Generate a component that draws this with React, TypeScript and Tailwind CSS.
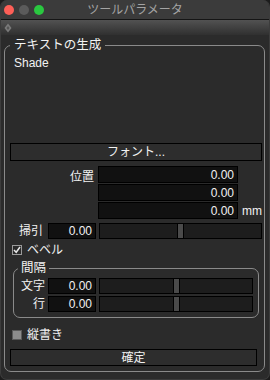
import React from "react";

const FONT = { fontFamily: '"Liberation Sans", "Noto Sans CJK JP", sans-serif' };

function Field({ value, w, h }: { value: string; w: string; h: string }) {
  return (
    <div
      className={`${w} ${h} bg-[#111111] border border-black flex items-center justify-end pr-[3px] text-[12px] leading-[14px] text-[#f2f2f2]`}
    >
      {value}
    </div>
  );
}

function Slider({ left, right }: { left: string; right: string }) {
  return (
    <div className="flex h-[16px]">
      <div className={`${left} h-full bg-[#1d1d1d] border border-black`} />
      <div className="w-[5px] h-full bg-[#4a4a4a] border-y border-black" />
      <div className={`${right} h-full bg-[#1d1d1d] border border-black`} />
    </div>
  );
}

function Check({ checked }: { checked: boolean }) {
  return checked ? (
    <div className="w-[10px] h-[10px] border border-[#9a9a9a] bg-[#2a2a2a] flex items-center justify-center">
      <svg width="8" height="8" viewBox="0 0 8 8">
        <path d="M1 4 L3.2 6.3 L7 1" fill="none" stroke="#e8e8e8" strokeWidth="1.5" />
      </svg>
    </div>
  ) : (
    <div className="w-[10px] h-[10px] border border-[#5a5a5a] bg-[#8c8c8c]" />
  );
}

export default function App() {
  return (
    <div className="w-[270px] h-[380px] bg-[#1c1c1c]" style={FONT}>
      <div className="w-[270px] h-[380px] bg-[#2b2b2b] rounded-[7px] overflow-hidden border-x border-b border-[#3c3c3c] flex flex-col">
        {/* title bar */}
        <div className="relative h-[20px] bg-[#3b3b3b] border-b border-[#151515] flex items-center">
          <div className="flex gap-[5px] pl-[3px]">
            <div className="w-[10px] h-[10px] rounded-full bg-[#fe5f57]" />
            <div className="w-[10px] h-[10px] rounded-full bg-[#5b5b5b]" />
            <div className="w-[10px] h-[10px] rounded-full bg-[#2ac840]" />
          </div>
          <div className="absolute inset-0 flex items-center justify-center text-[12px] text-[#a4a4a4]">
            ツールパラメータ
          </div>
        </div>
        {/* toolbar */}
        <div className="h-[15px] bg-gradient-to-b from-[#525252] to-[#303030] flex items-center pl-[3px]">
          <svg width="8" height="10" viewBox="0 0 8 10">
            <path d="M4 0.5 L7.5 5 L4 9.5 L0.5 5 Z" fill="#7a7a7a" />
            <path d="M4 3 L5.5 5 L4 7 L2.5 5 Z" fill="#555" />
          </svg>
        </div>
        {/* main group */}
        <fieldset className="mt-[2px] ml-[3px] w-[261px] border border-[#8a8a8a] rounded-[7px] pl-[5px] pr-[2px] pb-[5px]">
          <legend className="px-[4px] text-[12.5px] leading-[16px] text-[#f2f2f2]">テキストの生成</legend>
          <div className="h-[90px] pt-[2px] pl-[4px] text-[12px] leading-[16px] text-[#f2f2f2]">Shade</div>
          <div className="w-[252px] h-[18px] border border-black bg-[#2d2d2d] flex items-center justify-center text-[12px] text-[#f2f2f2]">
            フォント...
          </div>
          {/* position */}
          <div className="mt-[5px] flex items-start">
            <div className="w-[84px] pt-[3px] text-right text-[12px] leading-[16px] text-[#f2f2f2]">位置</div>
            <div className="ml-[4px] flex flex-col gap-[1px]">
              <Field value="0.00" w="w-[140px]" h="h-[17px]" />
              <Field value="0.00" w="w-[140px]" h="h-[17px]" />
              <Field value="0.00" w="w-[140px]" h="h-[17px]" />
            </div>
            <div className="ml-[4px] self-end text-[12px] leading-[16px] text-[#f2f2f2]">mm</div>
          </div>
          {/* sweep */}
          <div className="mt-[4px] flex items-center">
            <div className="w-[33px] text-right text-[12px] leading-[16px] text-[#f2f2f2]">掃引</div>
            <div className="ml-[5px]">
              <Field value="0.00" w="w-[48px]" h="h-[16px]" />
            </div>
            <div className="ml-[3px]">
              <Slider left="w-[79px]" right="w-[79px]" />
            </div>
          </div>
          {/* bevel */}
          <div className="mt-[3px] h-[16px] flex items-center pl-[2px]">
            <Check checked />
            <span className="ml-[5px] text-[12px] leading-[16px] text-[#f2f2f2]">ベベル</span>
          </div>
          {/* spacing group */}
          <fieldset className="mt-[2px] ml-[3px] w-[246px] border border-[#8a8a8a] rounded-[7px] pl-[3px] pr-[5px] pb-[5px]">
            <legend className="ml-[1px] px-[3px] text-[12.5px] leading-[16px] text-[#f2f2f2]">間隔</legend>
            <div className="mt-[2px] flex items-center">
              <div className="w-[28px] text-right text-[12px] leading-[16px] text-[#f2f2f2]">文字</div>
              <div className="ml-[3px]">
                <Field value="0.00" w="w-[48px]" h="h-[16px]" />
              </div>
              <div className="ml-[3px]">
                <Slider left="w-[75px]" right="w-[74px]" />
              </div>
            </div>
            <div className="mt-[2px] flex items-center">
              <div className="w-[28px] text-right text-[12px] leading-[16px] text-[#f2f2f2]">行</div>
              <div className="ml-[3px]">
                <Field value="0.00" w="w-[48px]" h="h-[16px]" />
              </div>
              <div className="ml-[3px]">
                <Slider left="w-[75px]" right="w-[74px]" />
              </div>
            </div>
          </fieldset>
          {/* vertical */}
          <div className="mt-[9px] h-[16px] flex items-center pl-[2px]">
            <Check checked={false} />
            <span className="ml-[5px] text-[12px] leading-[16px] text-[#f2f2f2]">縦書き</span>
          </div>
          <div className="mt-[6px] w-[247px] h-[17px] border border-black bg-[#2d2d2d] flex items-center justify-center text-[12px] text-[#f2f2f2]">
            確定
          </div>
        </fieldset>
      </div>
    </div>
  );
}
